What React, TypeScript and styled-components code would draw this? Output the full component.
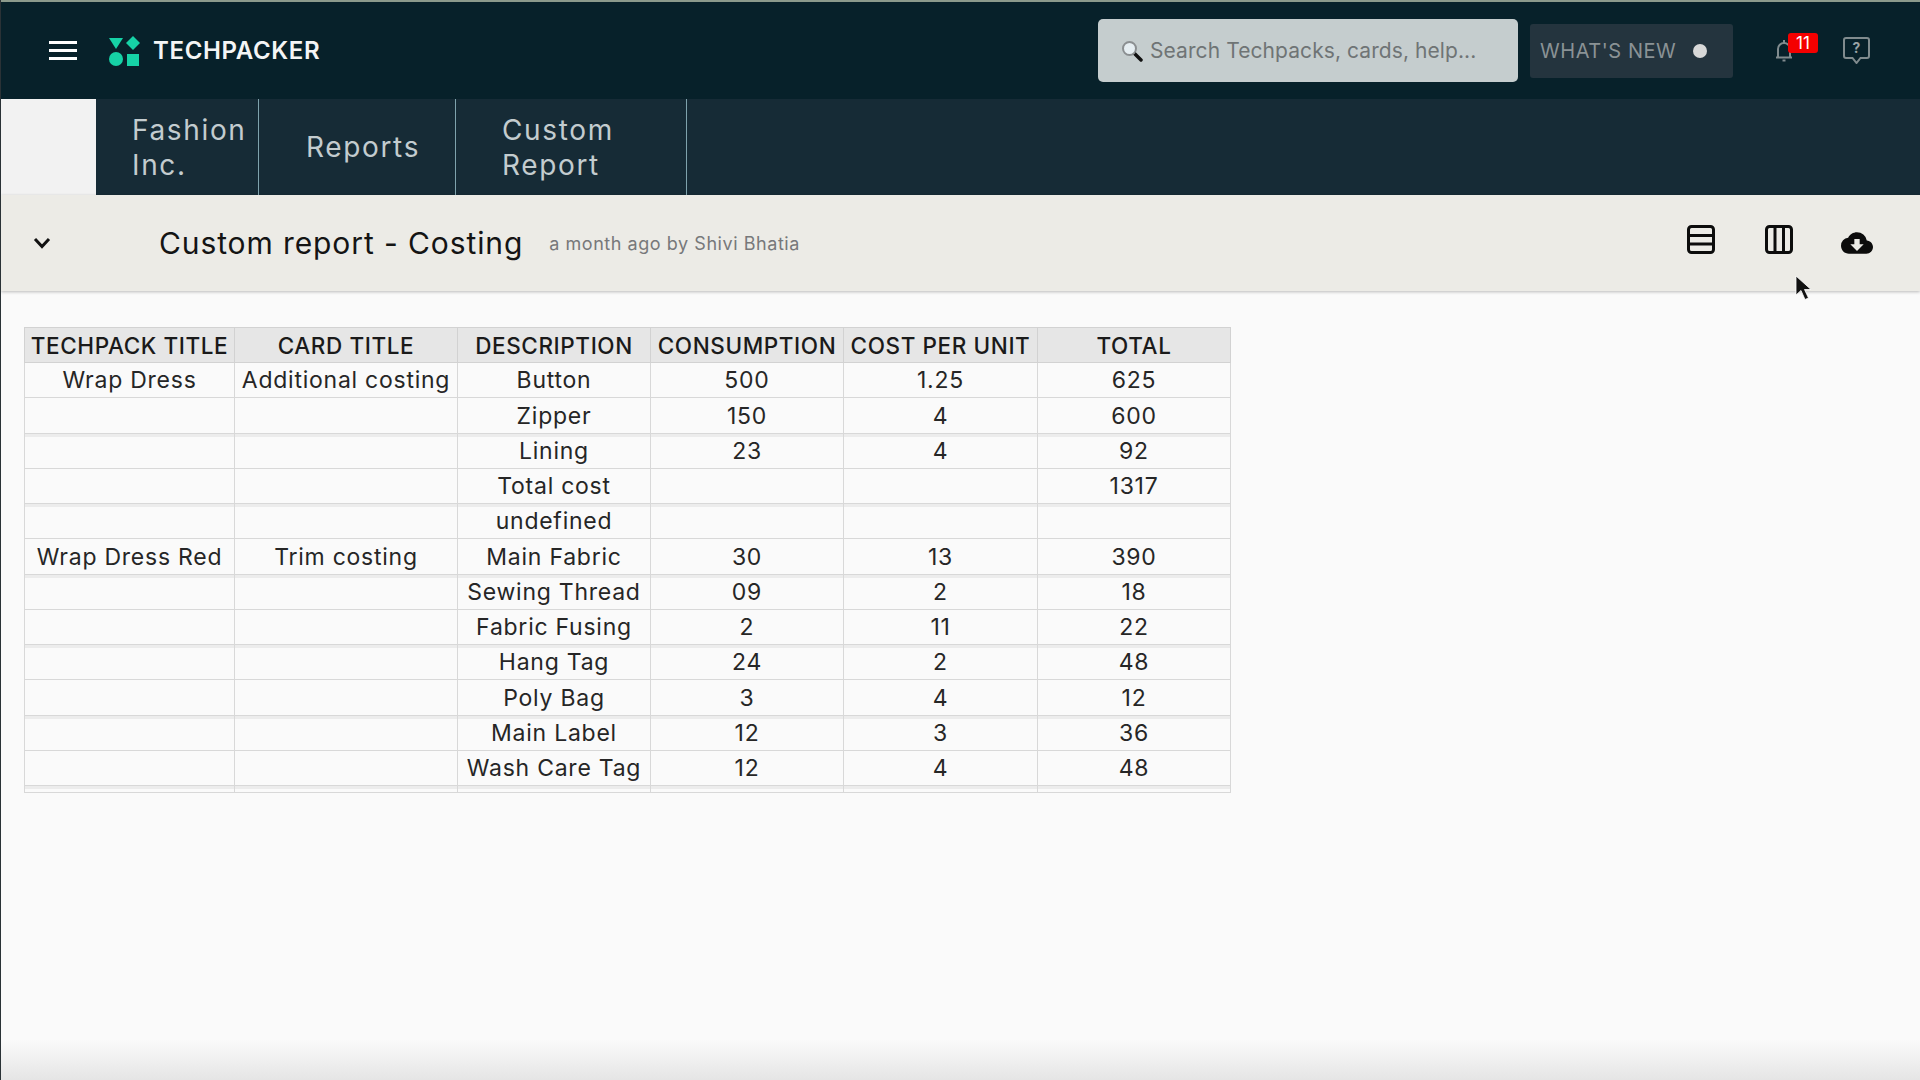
import styled, { createGlobalStyle } from 'styled-components';
import { MdCloudDownload } from 'react-icons/md';

const rows = [
  ['Wrap Dress', 'Additional costing', 'Button', '500', '1.25', '625'],
  ['', '', 'Zipper', '150', '4', '600'],
  ['', '', 'Lining', '23', '4', '92'],
  ['', '', 'Total cost', '', '', '1317'],
  ['', '', 'undefined', '', '', ''],
  ['Wrap Dress Red', 'Trim costing', 'Main Fabric', '30', '13', '390'],
  ['', '', 'Sewing Thread', '09', '2', '18'],
  ['', '', 'Fabric Fusing', '2', '11', '22'],
  ['', '', 'Hang Tag', '24', '2', '48'],
  ['', '', 'Poly Bag', '3', '4', '12'],
  ['', '', 'Main Label', '12', '3', '36'],
  ['', '', 'Wash Care Tag', '12', '4', '48'],
];

const columns = [
  { title: 'TECHPACK TITLE', width: 210 },
  { title: 'CARD TITLE', width: 223 },
  { title: 'DESCRIPTION', width: 193 },
  { title: 'CONSUMPTION', width: 193 },
  { title: 'COST PER UNIT', width: 194 },
  { title: 'TOTAL', width: 193 },
];

const App = () => {
  return (
    <Page>
      <GlobalStyle />
      <TopBar>
        <MenuButton>
          <span />
          <span />
          <span />
        </MenuButton>
        <Logo viewBox="0 0 31 30" width="31" height="30">
          <polygon points="0,2 14,2 7,13" fill="#16d2a6" />
          <polygon points="24,0 31,7 24,14 17,7" fill="#16d2a6" />
          <circle cx="7" cy="23" r="7" fill="#16d2a6" />
          <rect x="18" y="18" width="12" height="12" fill="#16d2a6" />
        </Logo>
        <Brand>TECHPACKER</Brand>
        <SearchBox>
          <svg viewBox="0 0 22 22" width="22" height="22">
            <line x1="13" y1="13" x2="20" y2="20" stroke="#111" strokeWidth="3.5" strokeLinecap="round" />
            <circle cx="8.5" cy="8.5" r="6.5" fill="#e6eef2" stroke="#8b8f91" strokeWidth="2" />
          </svg>
          <SearchText>Search Techpacks, cards, help...</SearchText>
        </SearchBox>
        <WhatsNew>
          WHAT'S NEW
          <Dot />
        </WhatsNew>
        <BellWrap>
          <svg viewBox="0 0 18 23" width="18" height="23" fill="none" stroke="#808b8e" strokeWidth="2">
            <path d="M1 18.5h16M3 18V10a6 6 0 0 1 12 0v8" />
            <path d="M9 1v3" />
            <path d="M7.5 21.5h3" />
          </svg>
          <Badge>11</Badge>
        </BellWrap>
        <HelpIcon viewBox="0 0 27 27" width="27" height="27">
          <path
            d="M3 1h21a2 2 0 0 1 2 2v16a2 2 0 0 1-2 2h-6.5l-4 5-4-5H3a2 2 0 0 1-2-2V3a2 2 0 0 1 2-2z"
            fill="none"
            stroke="#808b8e"
            strokeWidth="2"
          />
          <text x="13.5" y="16" textAnchor="middle" fontSize="14" fontWeight="700" fontFamily="Inter, sans-serif" fill="#9aa3a6">
            ?
          </text>
        </HelpIcon>
      </TopBar>

      <TabBar>
        <TabStub />
        <Tab $width={163} $padLeft={36}>
          Fashion Inc.
        </Tab>
        <Tab $width={197} $padLeft={47}>
          Reports
        </Tab>
        <Tab $width={231} $padLeft={46}>
          Custom Report
        </Tab>
      </TabBar>

      <ReportHeader>
        <Chevron viewBox="0 0 18 12" width="18" height="12">
          <polyline points="2,2 9,9.5 16,2" fill="none" stroke="#111" strokeWidth="3" />
        </Chevron>
        <Title>Custom report - Costing</Title>
        <Meta>a month ago by Shivi Bhatia</Meta>
        <Actions>
          <ViewIcon viewBox="0 0 28 29" width="28" height="29" fill="none" stroke="#0c0c0c" strokeWidth="3">
            <rect x="1.5" y="1.5" width="25" height="26" rx="3" />
            <path d="M1.5 10.5h25M1.5 19h25" />
          </ViewIcon>
          <ViewIcon viewBox="0 0 28 29" width="28" height="29" fill="none" stroke="#0c0c0c" strokeWidth="3">
            <rect x="1.5" y="1.5" width="25" height="26" rx="3" />
            <path d="M10 1.5v26M18.5 1.5v26" />
          </ViewIcon>
          <CloudIcon />
        </Actions>
        <Cursor viewBox="0 0 16 26" width="16" height="26">
          <path d="M1 1v19l5-4.5 4 9 3.5-1.5-4-8.5h6.5z" fill="#111" stroke="#fff" strokeWidth="0.8" />
        </Cursor>
      </ReportHeader>

      <Content>
        <ReportTable>
          <colgroup>
            {columns.map((column) => (
              <col key={column.title} width={column.width} />
            ))}
          </colgroup>
          <thead>
            <tr>
              {columns.map((column) => (
                <HeadCell key={column.title}>{column.title}</HeadCell>
              ))}
            </tr>
          </thead>
          <tbody>
            {rows.map((row, i) => (
              <tr key={i}>
                {row.map((cell, j) => (
                  <Cell key={j} $band={i > 0 && i % 2 === 0} $tall={i % 4 === 1}>
                    {cell}
                  </Cell>
                ))}
              </tr>
            ))}
            <tr>
              {columns.map((column) => (
                <StubCell key={column.title} />
              ))}
            </tr>
          </tbody>
        </ReportTable>
      </Content>
    </Page>
  );
};

const GlobalStyle = createGlobalStyle`
  html, body {
    margin: 0;
    padding: 0;
  }
  body {
    font-family: Inter, "Liberation Sans", sans-serif;
    background-color: #fafafa;
  }
`;

const Page = styled.div`
  width: 1920px;
  height: 1080px;
  overflow: hidden;
  display: flex;
  flex-direction: column;
  box-sizing: border-box;
  border-left: 1px solid #2a3236;
`;

const TopBar = styled.header`
  height: 97px;
  flex-shrink: 0;
  box-sizing: content-box;
  border-top: 2px solid #8b9a8c;
  background-color: #07212a;
  display: flex;
  align-items: center;
`;

const MenuButton = styled.div`
  width: 28px;
  margin-left: 48px;
  display: flex;
  flex-direction: column;
  gap: 5px;

  span {
    height: 3px;
    background-color: #fff;
  }
`;

const Logo = styled.svg`
  margin-left: 32px;
`;

const Brand = styled.div`
  margin-left: 13px;
  color: #f4f5f5;
  font-size: 24px;
  font-weight: 600;
  letter-spacing: 0.65px;
`;

const SearchBox = styled.div`
  width: 420px;
  height: 63px;
  margin-left: auto;
  padding-left: 23px;
  box-sizing: border-box;
  display: flex;
  align-items: center;
  gap: 7px;
  background-color: #c5cdce;
  border-radius: 5px;
`;

const SearchText = styled.span`
  color: #6f7475;
  font-size: 21px;
  letter-spacing: 0.08px;
`;

const WhatsNew = styled.div`
  width: 203px;
  height: 54px;
  margin-left: 12px;
  padding-left: 10px;
  box-sizing: border-box;
  display: flex;
  align-items: center;
  background-color: #24343e;
  border-radius: 3px;
  color: #8a9295;
  font-size: 20px;
  letter-spacing: 0.55px;
`;

const Dot = styled.span`
  width: 14px;
  height: 14px;
  margin-left: 17px;
  border-radius: 50%;
  background-color: #d8d8d8;
`;

const BellWrap = styled.div`
  position: relative;
  width: 18px;
  height: 23px;
  margin-left: 42px;
`;

const Badge = styled.span`
  position: absolute;
  top: -6px;
  left: 13px;
  width: 30px;
  height: 20px;
  border-radius: 3px;
  background-color: #f40000;
  color: #fff;
  font-size: 17px;
  line-height: 20px;
  text-align: center;
`;

const HelpIcon = styled.svg`
  margin-left: 50px;
  margin-right: 50px;
`;

const TabBar = styled.nav`
  height: 96px;
  flex-shrink: 0;
  display: flex;
  background-color: #162b36;
`;

const TabStub = styled.div`
  width: 95px;
  background-color: #f2f2f2;
`;

const Tab = styled.div<{ $width: number; $padLeft: number }>`
  width: ${(props) => props.$width}px;
  padding: 2px 20px 0 ${(props) => props.$padLeft}px;
  box-sizing: border-box;
  display: flex;
  align-items: center;
  border-right: 1px solid #7fa3ad;
  color: #c3cccf;
  font-size: 28px;
  line-height: 35.5px;
  letter-spacing: 1.65px;
`;

const ReportHeader = styled.section`
  position: relative;
  height: 96px;
  flex-shrink: 0;
  display: flex;
  align-items: center;
  background-color: #ecebe6;
  box-shadow: 0 1px 3px rgba(0, 0, 0, 0.25);
  z-index: 1;
`;

const Chevron = styled.svg`
  margin-left: 32px;
`;

const Title = styled.h1`
  margin: 0 0 0 108px;
  color: #141414;
  font-size: 30px;
  font-weight: 400;
  letter-spacing: 0.9px;
`;

const Meta = styled.span`
  margin-left: 26px;
  color: #77787a;
  font-size: 18px;
  letter-spacing: 0.55px;
`;

const Actions = styled.div`
  margin-left: auto;
  margin-right: 47px;
  display: flex;
  align-items: center;
  gap: 50px;
`;

const ViewIcon = styled.svg`
  margin-top: -7px;
`;

const CloudIcon = styled(MdCloudDownload)`
  width: 32px;
  height: 32px;
  margin-left: -2px;
  color: #0c0c0c;
`;

const Cursor = styled.svg`
  position: absolute;
  top: 80px;
  left: 1794px;
`;

const Content = styled.main`
  flex: 1;
  padding: 36px 0 0 23px;
  background: linear-gradient(to bottom, #fafafa calc(100% - 40px), #e5e5e5 100%);
`;

const ReportTable = styled.table`
  width: 1206px;
  table-layout: fixed;
  border-collapse: collapse;
`;

const HeadCell = styled.th`
  height: 34px;
  padding: 0;
  border: 1px solid #d2d2d2;
  background-color: #e6e6e6;
  color: #1a1a1a;
  font-size: 22.5px;
  font-weight: 500;
  letter-spacing: 0.6px;
  text-align: center;
  white-space: nowrap;
`;

const Cell = styled.td<{ $band: boolean; $tall: boolean }>`
  height: ${(props) => (props.$tall ? 35 : 34)}px;
  padding: 0;
  border: 1px solid #d8d8d8;
  color: #262626;
  font-size: 23px;
  line-height: 28px;
  letter-spacing: 0.75px;
  text-align: center;
  white-space: nowrap;
  box-shadow: ${(props) => (props.$band ? 'inset 0 3px 0 #ececec' : 'none')};
`;

const StubCell = styled.td`
  height: 6px;
  padding: 0;
  border: 1px solid #d8d8d8;
  box-shadow: inset 0 3px 0 #ececec;
`;

export default App;
